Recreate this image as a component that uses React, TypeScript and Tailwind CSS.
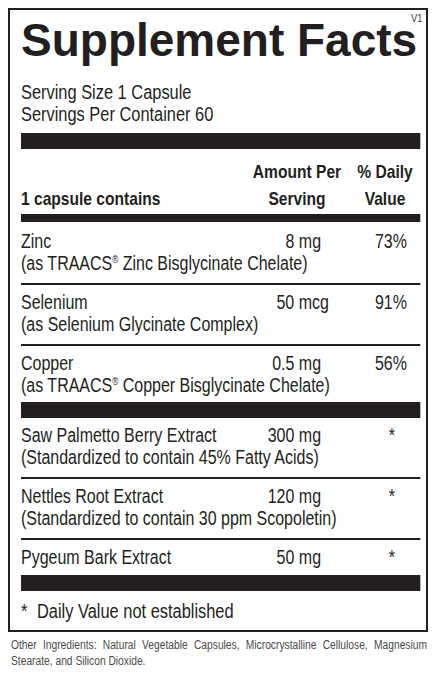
import React from "react";

type Row = {
    name: string;
    sub?: React.ReactNode;
    amt: string;
    dv: string;
    amtPad?: string;
    pt: string;
    pb: string;
};

// the label uses a condensed face; no narrow font is installed, so the
// text blocks are laid out 1/0.82 wider and squeezed back with scale-x
const rows: Row[] = [
    {
        name: 'Zinc',
        sub: <>(as TRAACS<sup className="text-[10px] -top-[7px]">®</sup> Zinc Bisglycinate Chelate)</>,
        amt: '8 mg',
        dv: '73%',
        pt: 'pt-[8px]',
        pb: 'pb-[9px]',
    },
    {
        name: 'Selenium',
        sub: '(as Selenium Glycinate Complex)',
        amt: '50 mcg',
        dv: '91%',
        amtPad: 'pr-[16px]',
        pt: 'pt-[6px]',
        pb: 'pb-[9px]',
    },
    {
        name: 'Copper',
        sub: <>(as TRAACS<sup className="text-[10px] -top-[7px]">®</sup> Copper Bisglycinate Chelate)</>,
        amt: '0.5 mg',
        dv: '56%',
        pt: 'pt-[6px]',
        pb: 'pb-[6px]',
    },
];

const herbs: Row[] = [
    {
        name: 'Saw Palmetto Berry Extract',
        sub: '(Standardized to contain 45% Fatty Acids)',
        amt: '300 mg',
        dv: '*',
        pt: 'pt-[6px]',
        pb: 'pb-[9px]',
    },
    {
        name: 'Nettles Root Extract',
        sub: '(Standardized to contain 30 ppm Scopoletin)',
        amt: '120 mg',
        dv: '*',
        pt: 'pt-[6px]',
        pb: 'pb-[9px]',
    },
    {
        name: 'Pygeum Bark Extract',
        amt: '50 mg',
        dv: '*',
        pt: 'pt-[6px]',
        pb: 'pb-[7px]',
    },
];

function FactRow({ row }: { row: Row }) {
    return (
        <div className={`${row.pt} ${row.pb} text-[19.5px] leading-[22px]`}>
            <div className="flex whitespace-nowrap">
                <div className="flex-1">{row.name}</div>
                <div className={`w-[109.8px] text-right ${row.amtPad ?? 'pr-[25.6px]'}`}>{row.amt}</div>
                {row.dv === '*' ? (
                    <div className="w-[95.1px] text-right pr-[30.5px]">*</div>
                ) : (
                    <div className="w-[95.1px] text-right pr-[15.9px]">{row.dv}</div>
                )}
            </div>
            {row.sub && <div className="whitespace-nowrap">{row.sub}</div>}
        </div>
    );
}

const Thin = () => <div className="h-[2px] bg-[#231f20]" />;
const Thick = ({ h = 'h-[16px]' }: { h?: string }) => <div className={`${h} bg-[#231f20]`} />;

export default function App() {
    return (
        <div className="w-[437px] h-[675px] overflow-hidden bg-white pt-[8px] text-[#231f20] font-['Liberation_Sans',Arial,sans-serif]">
            <div className="ml-[8px] w-[420px] border-2 border-[#231f20] relative pl-[11px] pr-[6px] pt-[12px]">
                <div className="absolute top-[4px] right-[4px] text-[11px] leading-[8px] text-[#3a3a3a] scale-x-[0.85] origin-right">V1</div>
                <h1 className="font-bold text-[46px] leading-[36px] whitespace-nowrap">
                    Supplement Facts
                </h1>

                <div className="w-[486.6px] origin-left scale-x-[0.82]">
                    <div className="mt-[23px] text-[20px] leading-[22px]">
                        <p>Serving Size 1 Capsule</p>
                        <p>Servings Per Container 60</p>
                    </div>
                    <div className="mt-[8px]">
                        <Thick />
                    </div>

                    {/* column headings */}
                    <div className="mt-[9px] flex items-end font-bold text-[19px] leading-[27px] whitespace-nowrap">
                        <div className="flex-1">1 capsule contains</div>
                        <div className="w-[109.8px] text-center">
                            <div>Amount Per</div>
                            <div>Serving</div>
                        </div>
                        <div className="w-[95.1px] pl-[9.8px] text-center">
                            <div>% Daily</div>
                            <div>Value</div>
                        </div>
                    </div>
                    <div className="mt-[2px]">
                        <Thick h="h-[8px]" />
                    </div>

                    {rows.map((row, i) => (
                        <div key={row.name}>
                            <FactRow row={row} />
                            {i < rows.length - 1 ? <Thin /> : <Thick />}
                        </div>
                    ))}

                    {herbs.map((row, i) => (
                        <div key={row.name}>
                            <FactRow row={row} />
                            {i < herbs.length - 1 ? <Thin /> : <Thick />}
                        </div>
                    ))}

                    <div className="pt-[9px] pb-[8px] text-[20px] leading-[22px] flex">
                        <span className="w-[19.5px]">*</span>
                        <span>Daily Value not established</span>
                    </div>
                </div>
            </div>

            <div className="mt-[5px] ml-[11px] w-[507.3px] origin-left scale-x-[0.82]">
                <p className="text-[12.5px] leading-[16px] text-justify text-[#4a4a4a]">
                    Other Ingredients: Natural Vegetable Capsules, Microcrystalline Cellulose, Magnesium Stearate, and Silicon Dioxide.
                </p>
            </div>
        </div>
    );
}
